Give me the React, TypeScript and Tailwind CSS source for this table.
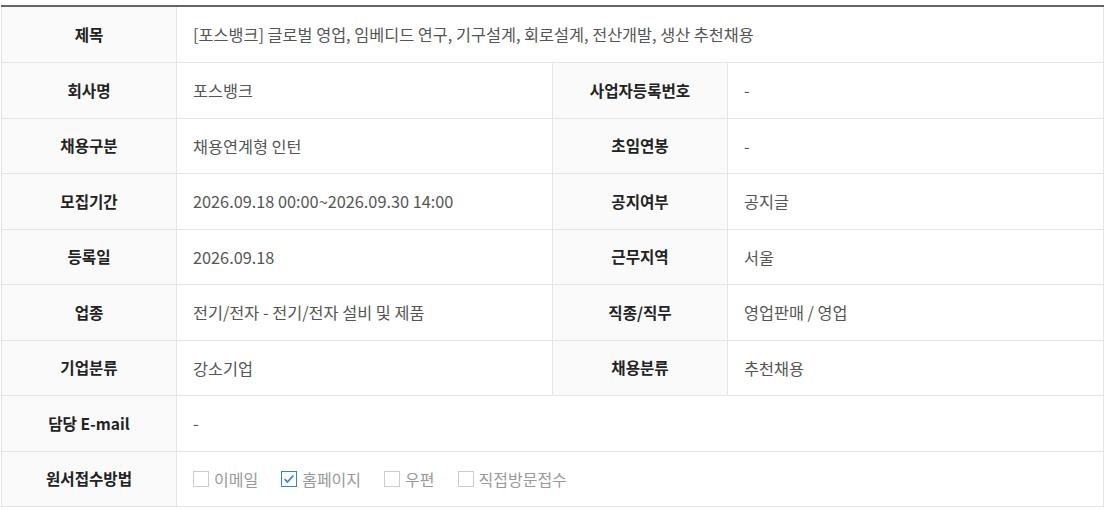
import React from "react";

const font = { fontFamily: '"Noto Sans CJK KR", "Noto Sans", sans-serif' };

type Cell = { label: string; value: React.ReactNode };

const rows: (Cell | [Cell, Cell])[] = [
  { label: "제목", value: "[포스뱅크] 글로벌 영업, 임베디드 연구, 기구설계, 회로설계, 전산개발, 생산 추천채용" },
  [
    { label: "회사명", value: "포스뱅크" },
    { label: "사업자등록번호", value: "-" },
  ],
  [
    { label: "채용구분", value: "채용연계형 인턴" },
    { label: "초임연봉", value: "-" },
  ],
  [
    { label: "모집기간", value: "2026.09.18 00:00~2026.09.30 14:00" },
    { label: "공지여부", value: "공지글" },
  ],
  [
    { label: "등록일", value: "2026.09.18" },
    { label: "근무지역", value: "서울" },
  ],
  [
    { label: "업종", value: "전기/전자 - 전기/전자 설비 및 제품" },
    { label: "직종/직무", value: "영업판매 / 영업" },
  ],
  [
    { label: "기업분류", value: "강소기업" },
    { label: "채용분류", value: "추천채용" },
  ],
  { label: "담당 E-mail", value: "-" },
];

const Check = ({ label, checked }: { label: string; checked?: boolean }) => (
  <span className="flex items-center gap-[5px]">
    <span
      className={
        "flex h-4 w-4 items-center justify-center border bg-white " +
        (checked ? "border-[#2b84e0]" : "border-[#cccccc]")
      }
    >
      {checked && (
        <svg viewBox="0 0 16 16" className="h-[14px] w-[14px]">
          <path d="M3 8.2l3.2 3.3L13 4" fill="none" stroke="#2b84e0" strokeWidth="2" />
        </svg>
      )}
    </span>
    <span className="text-[16px] text-[#999999]">{label}</span>
  </span>
);

const Th = ({ children }: { children: React.ReactNode }) => (
  <th className="w-[175px] border border-[#e5e5e5] bg-[#fafafa] text-center align-middle text-[15.6px] font-bold text-[#222222]">
    {children}
  </th>
);

const Td = ({ children, span }: { children: React.ReactNode; span?: number }) => (
  <td
    colSpan={span}
    className="border border-[#e5e5e5] bg-white pl-[16px] align-middle text-[16.3px] text-[#555555]"
  >
    {children}
  </td>
);

export default function App() {
  return (
    <div className="bg-white pt-[5px] pl-[1px]" style={font}>
      <table className="w-[1102px] table-fixed border-collapse border-t-2 border-t-[#666666]">
        <colgroup>
          <col className="w-[175px]" />
          <col className="w-[376px]" />
          <col className="w-[175px]" />
          <col className="w-[376px]" />
        </colgroup>
        <tbody>
          {rows.map((r, i) => {
            const h = i === 0 ? "h-[56.5px]" : "h-[55.5px]";
            return Array.isArray(r) ? (
              <tr key={i} className={h}>
                <Th>{r[0].label}</Th>
                <Td>{r[0].value}</Td>
                <Th>{r[1].label}</Th>
                <Td>{r[1].value}</Td>
              </tr>
            ) : (
              <tr key={i} className={h}>
                <Th>{r.label}</Th>
                <Td span={3}>{r.value}</Td>
              </tr>
            );
          })}
          <tr className="h-[55.5px]">
            <Th>원서접수방법</Th>
            <Td span={3}>
              <div className="flex items-center gap-[23px]">
                <Check label="이메일" />
                <Check label="홈페이지" checked />
                <Check label="우편" />
                <Check label="직접방문접수" />
              </div>
            </Td>
          </tr>
        </tbody>
      </table>
    </div>
  );
}
